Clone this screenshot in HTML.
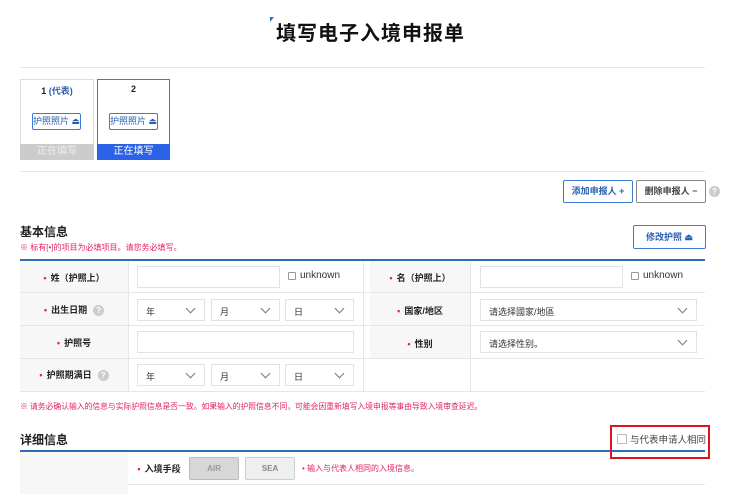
<!DOCTYPE html>
<html><head><meta charset="utf-8"><style>
*{box-sizing:border-box;margin:0;padding:0}
body{width:740px;height:494px;background:#fff;position:relative;overflow:hidden;font-family:"Liberation Sans","Noto Sans CJK SC",sans-serif;color:#222}
.a{position:absolute}
.hr{position:absolute;height:1px;background:#e6e6e6}
.btn{position:absolute;border:1px solid #3a7bd5;border-radius:2px;color:#2a5fb0;font-size:9px;text-align:center;background:#fff;font-weight:bold}
.red{color:#e0245e}
.lab{position:absolute;font-size:9px;font-weight:bold;text-align:center}
.lab b{color:#e0245e;margin-right:4px}
.inp{position:absolute;border:1px solid #e2e2e2;background:#fff;height:22px}
.sel{position:absolute;border:1px solid #e2e2e2;background:#fff;height:22px;font-size:9px;padding:5px 0 0 8px;color:#333}
.sel i{position:absolute;right:10px;top:5px;width:7px;height:7px;border-right:1px solid #777;border-bottom:1px solid #777;transform:rotate(45deg)}
.q{display:inline-block;width:11px;height:11px;border-radius:50%;background:#ccc;color:#fff;font-size:8px;text-align:center;line-height:11px;vertical-align:middle;margin-left:6px}
.cb{position:absolute;width:8px;height:8px;border:1px solid #999;border-radius:1px;background:#fff}
.unk{position:absolute;font-size:10px;color:#333}
</style></head><body>
<div class="a" style="left:270px;top:17px;width:0;height:0;border-top:5px solid #2a6fd5;border-right:4px solid transparent"></div>
<div class="a" style="left:276px;top:17px;font-size:20px;font-weight:bold;color:#111;letter-spacing:1px">填写电子入境申报单</div>
<div class="hr" style="left:20px;top:67px;width:685px"></div>
<div class="a" style="left:20px;top:79px;width:74px;height:81px;border:1px solid #ddd;background:#fff"></div>
<div class="a" style="left:20px;top:84px;width:74px;text-align:center;font-size:9px;font-weight:bold">1 <span style="color:#2a5fb0">(代表)</span></div>
<div class="btn" style="left:32px;top:113px;width:49px;height:17px;line-height:15px;font-weight:normal">护照照片 ⏏</div>
<div class="a" style="left:20px;top:144px;width:74px;height:16px;background:#ccc;color:#eee;font-size:10px;text-align:center;line-height:16px">正在填写</div>
<div class="a" style="left:97px;top:79px;width:73px;height:81px;border:1px solid #3a7bd5;background:#fff"></div>
<div class="a" style="left:97px;top:84px;width:73px;text-align:center;font-size:9px;font-weight:bold">2</div>
<div class="btn" style="left:109px;top:113px;width:49px;height:17px;line-height:15px;font-weight:normal">护照照片 ⏏</div>
<div class="a" style="left:97px;top:144px;width:73px;height:16px;background:#2b62e8;color:#fff;font-size:10px;text-align:center;line-height:16px">正在填写</div>
<div class="hr" style="left:20px;top:171px;width:685px"></div>
<div class="btn" style="left:563px;top:180px;width:70px;height:23px;line-height:21px">添加申报人 +</div>
<div class="btn" style="left:636px;top:180px;width:70px;height:23px;line-height:21px;border-color:#888;color:#444">删除申报人 −</div>
<div class="a" style="left:709px;top:186px;width:11px;height:11px;border-radius:50%;background:#ccc;color:#fff;font-size:8px;text-align:center;line-height:11px;font-weight:bold">?</div>
<div class="a" style="left:20px;top:223px;font-size:12px;font-weight:bold">基本信息</div>
<div class="a red" style="left:20px;top:242px;font-size:8px">※ 标有[•]的项目为必填项目。请您务必填写。</div>
<div class="btn" style="left:633px;top:225px;width:73px;height:24px;line-height:22px">修改护照 ⏏</div>
<div class="a" style="left:20px;top:259px;width:685px;height:2px;background:#2a6fb5"></div>
<div class="a" style="left:20px;top:261px;width:108px;height:131px;background:#f7f7f7"></div>
<div class="a" style="left:370px;top:261px;width:100px;height:98px;background:#f7f7f7"></div>
<div class="a" style="left:128px;top:261px;width:1px;height:131px;background:#e6e6e6"></div>
<div class="a" style="left:363px;top:261px;width:1px;height:131px;background:#e6e6e6"></div>
<div class="a" style="left:470px;top:261px;width:1px;height:131px;background:#e6e6e6"></div>
<div class="hr" style="left:20px;top:292px;width:685px"></div>
<div class="hr" style="left:20px;top:325px;width:685px"></div>
<div class="hr" style="left:20px;top:358px;width:685px"></div>
<div class="hr" style="left:20px;top:391px;width:685px"></div>
<div class="lab" style="left:20px;top:271px;width:108px"><b>•</b>姓（护照上）</div>
<div class="lab" style="left:20px;top:303px;width:108px"><b>•</b>出生日期<span class="q">?</span></div>
<div class="lab" style="left:20px;top:336px;width:108px"><b>•</b>护照号</div>
<div class="lab" style="left:20px;top:368px;width:108px"><b>•</b>护照期满日<span class="q">?</span></div>
<div class="lab" style="left:370px;top:271px;width:100px"><b>•</b>名（护照上）</div>
<div class="lab" style="left:370px;top:304px;width:100px"><b>•</b>国家/地区</div>
<div class="lab" style="left:370px;top:337px;width:100px"><b>•</b>性别</div>
<div class="inp" style="left:137px;top:266px;width:143px"></div>
<div class="cb" style="left:288px;top:272px"></div><div class="unk" style="left:300px;top:270px">unknown</div>
<div class="inp" style="left:480px;top:266px;width:143px"></div>
<div class="cb" style="left:631px;top:272px"></div><div class="unk" style="left:643px;top:270px">unknown</div>
<div class="sel" style="left:137px;top:299px;width:68px">年<i></i></div>
<div class="sel" style="left:211px;top:299px;width:69px">月<i></i></div>
<div class="sel" style="left:285px;top:299px;width:69px">日<i></i></div>
<div class="inp" style="left:137px;top:331px;width:217px"></div>
<div class="sel" style="left:137px;top:364px;width:68px">年<i></i></div>
<div class="sel" style="left:211px;top:364px;width:69px">月<i></i></div>
<div class="sel" style="left:285px;top:364px;width:69px">日<i></i></div>
<div class="sel" style="left:480px;top:299px;width:217px">请选择國家/地區<i></i></div>
<div class="sel" style="left:480px;top:331px;width:217px">请选择性别。<i></i></div>
<div class="a red" style="left:20px;top:401px;font-size:7.8px">※ 请务必确认输入的信息与实际护照信息是否一致。如果输入的护照信息不同，可能会因重新填写入境申报等事由导致入境审查延迟。</div>
<div class="a" style="left:20px;top:431px;font-size:12px;font-weight:bold">详细信息</div>
<div class="a" style="left:20px;top:450px;width:685px;height:2px;background:#2a6fb5"></div>
<div class="a" style="left:610px;top:425px;width:100px;height:34px;border:2px solid #e0141e"></div>
<div class="cb" style="left:617px;top:434px;width:10px;height:10px;border-color:#bbb"></div>
<div class="a" style="left:630px;top:432px;font-size:9.5px;color:#444">与代表申请人相同</div>
<div class="a" style="left:20px;top:452px;width:108px;height:42px;background:#f7f7f7"></div>
<div class="lab" style="left:134px;top:462px;width:50px"><b>•</b>入境手段</div>
<div class="a" style="left:189px;top:457px;width:50px;height:23px;background:#d7d7d7;border:1px solid #bbb;border-radius:2px;font-size:8px;color:#999;text-align:center;line-height:21px;font-weight:bold">AIR</div>
<div class="a" style="left:245px;top:457px;width:50px;height:23px;background:#efefef;border:1px solid #ccc;border-radius:2px;font-size:8px;color:#888;text-align:center;line-height:21px;font-weight:bold">SEA</div>
<div class="a red" style="left:302px;top:463px;font-size:8px">• 输入与代表人相同的入境信息。</div>
<div class="hr" style="left:128px;top:484px;width:577px"></div>
</body></html>
